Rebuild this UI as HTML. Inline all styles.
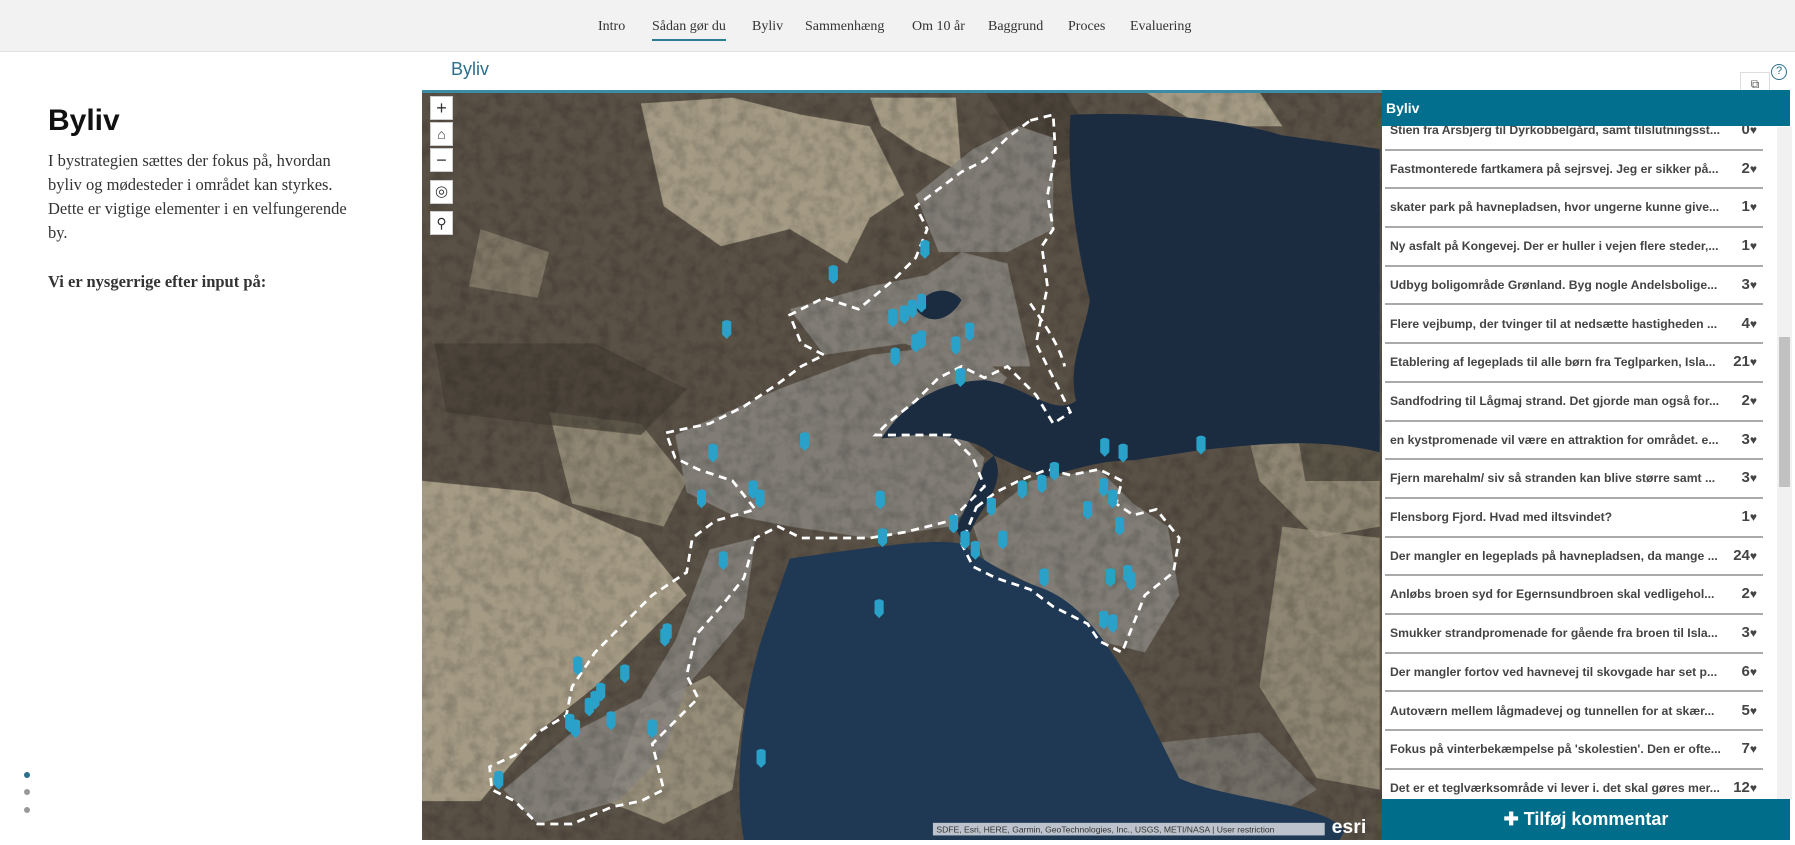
<!DOCTYPE html>
<html><head><meta charset="utf-8">
<style>
*{margin:0;padding:0;box-sizing:border-box}
body{width:1795px;height:840px;overflow:hidden;background:#fff;font-family:"Liberation Sans",sans-serif;position:relative}
.nav{position:absolute;left:0;top:0;width:1795px;height:52px;background:#f2f2f2;border-bottom:1px solid #e2e2e2}
.nav span{position:absolute;top:19px;font-family:"Liberation Serif",serif;font-size:14px;color:#333}
.nav .act{border-bottom:2px solid #2b7d96;padding-bottom:4px}
.left h1{position:absolute;left:48px;top:104px;font-size:30px;font-weight:bold;color:#111}
.left p{position:absolute;left:48px;top:149px;width:305px;font-family:"Liberation Serif",serif;font-size:16.5px;line-height:24px;color:#333}
.left .b{top:270px;font-weight:bold;width:330px}
.dot{position:absolute;left:24px;width:6px;height:6px;border-radius:50%;background:#999}
.title{position:absolute;left:451px;top:59px;font-size:18px;color:#2b6f8a}
.map{position:absolute;left:422px;top:90px;width:960px;height:750px;border-top:3px solid #3c8ca6}
.ctl{position:absolute;left:430px;width:23px;height:24px;background:#fff;border:1px solid #ccc;color:#333;text-align:center;font-size:18px;line-height:22px}
.row{position:absolute;width:378px;height:38.7px;border-bottom:2px solid #aaa;font-size:12.2px;font-weight:bold;color:#444;padding-left:5px;line-height:36px;background:#fff}
.row i{font-style:normal;display:block;width:335px;overflow:hidden;white-space:nowrap}
.row b{position:absolute;right:6px;top:0;font-size:15px;color:#444}
.btn{position:absolute;left:1382px;top:799px;width:408px;height:41px;background:#006d8a;color:#fff;font-weight:bold;font-size:18px;text-align:center;line-height:41px}
.sb{position:absolute;left:1777px;top:127px;width:15px;height:672px;background:#f1f1f1}
</style></head><body>
<div class="nav">
<span style="left:598px">Intro</span>
<span class="act" style="left:652px">Sådan gør du</span>
<span style="left:752px">Byliv</span>
<span style="left:805px">Sammenhæng</span>
<span style="left:912px">Om 10 år</span>
<span style="left:988px">Baggrund</span>
<span style="left:1068px">Proces</span>
<span style="left:1130px">Evaluering</span>
</div>
<div class="left">
<h1>Byliv</h1>
<p>I bystrategien sættes der fokus på, hvordan byliv og mødesteder i området kan styrkes. Dette er vigtige elementer i en velfungerende by.</p>
<p class="b">Vi er nysgerrige efter input på:</p>
</div>
<div class="dot" style="top:772px;background:#2b6f8a"></div>
<div class="dot" style="top:789px"></div>
<div class="dot" style="top:807px"></div>
<div class="title">Byliv</div>
<div style="position:absolute;left:1740px;top:72px;width:30px;height:24px;background:#fff;border:1px solid #ddd;font-size:12px;text-align:center;line-height:22px;color:#555">⧉</div>
<div style="position:absolute;left:1771px;top:64px;width:16px;height:16px;border:1.5px solid #2b6f8a;border-radius:50%;font-size:11px;text-align:center;line-height:13px;color:#2b6f8a">?</div>
<div class="map">
<svg width="960" height="747" viewBox="369 81 838 653" preserveAspectRatio="none">
<defs><filter id="n" x="0" y="0" width="100%" height="100%"><feTurbulence type="fractalNoise" baseFrequency="0.09" numOctaves="3" seed="4"/><feColorMatrix type="matrix" values="0 0 0 0 0  0 0 0 0 0  0 0 0 0 0  0 0 0 1.2 -0.45"/></filter></defs>
<rect x="369" y="79" width="840" height="660" fill="#5a5146"/>
<g fill="#aea48d" opacity=".9">
<path d="M560,90 L640,85 L700,100 L760,110 L790,170 L760,190 L740,230 L690,200 L630,215 L580,180 Z"/>
<path d="M760,85 L835,85 L840,150 L800,130 L770,110Z"/>
<path d="M1070,300 L1205,290 L1205,460 L1150,470 L1100,420 Z" opacity=".7"/>
<path d="M1120,460 L1205,470 L1205,690 L1150,680 L1100,600 Z" opacity=".7"/>
<path d="M369,420 L470,430 L560,470 L600,520 L560,560 L520,600 L470,640 L420,700 L369,700Z"/>
<path d="M480,360 L560,370 L600,420 L580,460 L500,440Z" opacity=".7"/>
<path d="M1000,80 L1100,80 L1120,110 L1050,110Z"/>
<path d="M420,200 L480,220 L470,260 L410,250Z" opacity=".5"/>
<path d="M560,620 L620,590 L650,620 L640,690 L580,720 L530,700Z" opacity=".8"/>
</g>
<g fill="#463e35" opacity=".7">
<path d="M380,300 L520,300 L600,340 L560,380 L470,370 L390,360Z"/>
<path d="M860,80 L930,80 L960,130 L900,150 L880,110Z"/>
<path d="M1130,360 L1205,360 L1205,420 L1140,420Z"/>
</g>
<g fill="#888680" opacity=".85">
<path d="M590,380 L680,340 L760,310 L840,300 L880,330 L840,380 L860,400 L850,440 L830,460 L760,470 L690,460 L640,450 L600,430Z"/>
<path d="M690,270 L760,250 L810,240 L840,220 L880,230 L900,320 L850,320 L790,300 L720,310Z"/>
<path d="M800,170 L850,130 L890,110 L920,120 L920,200 L880,220 L820,220Z"/>
<path d="M850,460 L900,420 L960,410 L990,440 L1020,460 L1030,520 L1000,570 L960,560 L900,510 L860,490Z"/>
<path d="M440,690 L500,640 L560,610 L590,560 L620,480 L660,470 L650,540 L600,600 L580,660 L540,700 L470,720Z"/>
<path d="M1000,650 L1100,640 L1150,690 L1080,734 L1000,734Z" opacity=".7"/>
</g>
<rect x="369" y="79" width="840" height="660" filter="url(#n)" opacity=".3"/>
<g fill="#1c2c40">
<path d="M935,100 C990,98 1060,100 1120,118 L1205,130 L1205,395 C1150,382 1100,388 1050,393 L990,402 C960,402 940,410 915,416 C895,412 880,402 868,398 C858,386 830,380 800,380 L770,383 C792,350 822,333 860,332 C895,336 920,365 940,350 C932,318 948,290 952,262 C938,205 932,150 935,100Z"/>
<path d="M800,270 C810,250 830,250 840,262 C830,280 812,285 800,270Z"/>
<path d="M868,398 C880,420 860,440 850,460 L842,475 L835,462 C845,440 855,420 860,405Z"/>
</g>
<path fill="#1f3854" d="M690,488 C760,478 815,470 840,475 C862,492 880,502 905,512 C945,525 965,560 990,600 L1030,680 C1075,700 1150,700 1175,725 L1170,734 L650,734 C640,680 650,600 670,545 Z"/>
<g fill="none" stroke="#fff" stroke-width="2.4" stroke-dasharray="7 5">
<path d="M900,105 L920,100 L922,135 L915,170 L920,200 L910,215 L915,250 L905,300 L920,330 L935,360 L920,370 L905,345 L880,320 L860,330 L840,320 L820,330 L800,350 L775,370 L765,380 L830,380 L850,400 L860,425 L845,440 L830,455 L790,465 L760,470 L700,470 L680,460 L660,470 L650,505 L630,530 L608,555 L600,590 L610,610 L590,630 L570,650 L580,690 L560,700 L535,705 L500,720 L470,720 L450,700 L430,690 L428,670 L450,660 L470,640 L495,625 L500,600 L520,570 L545,545 L570,520 L600,500 L605,470 L625,455 L660,445 L640,420 L610,410 L590,400 L582,378 L620,370 L650,355 L680,335 L700,320 L720,310 L700,300 L690,275 L720,260 L750,270 L780,245 L800,225 L810,200 L800,180 L820,165 L840,150 L860,140 L880,120 Z"/>
<path d="M853,443 L870,430 L890,420 L915,410 L935,415 L960,410 L980,420 L975,440 L990,450 L1010,445 L1030,470 L1025,500 L1000,520 L990,545 L980,570 L960,560 L950,545 L920,530 L900,515 L870,505 L850,495 L840,475Z"/>
<path d="M900,265 C910,280 925,300 930,320"/>
</g>
<g fill="#2aa1c9" id="pins"></g>
<rect x="815" y="719" width="342" height="11" fill="#fff" opacity=".7"/>
<text x="818" y="727.5" font-family="Liberation Sans" font-size="7.5" fill="#333">SDFE, Esri, HERE, Garmin, GeoTechnologies, Inc., USGS, METI/NASA | User restriction</text>
<text x="1163" y="728" font-family="Liberation Sans" font-size="17" font-weight="bold" fill="#fff">esri</text>
</svg>
</div>
<div class="ctl" style="top:96px">+</div>
<div class="ctl" style="top:122px;font-size:14px">⌂</div>
<div class="ctl" style="top:148px">−</div>
<div class="ctl" style="top:180px;font-size:15px">◎</div>
<div class="ctl" style="top:211px;font-size:14px">⚲</div>
<div style="position:absolute;left:1382px;top:90px;width:408px;height:710px;background:#fff"></div>
<div id="rows"></div>
<div class="sb"><div style="position:absolute;left:2px;top:210px;width:11px;height:150px;background:#c1c1c1"></div></div>
<div class="btn">✚ Tilføj kommentar</div>
<div style="position:absolute;left:1382px;top:90px;width:408px;height:36px;background:#016f8d;color:#fff;font-weight:bold;font-size:14px;padding:10px 4px">Byliv</div>
<script>
var pins=[[728,240],[635,288],[808,218],[780,278],[790,275],[797,270],[805,265],[782,312],[800,300],[805,297],[835,302],[847,290],[839,330],[703,386],[623,396],[613,436],[658,428],[664,436],[769,437],[771,470],[833,458],[843,472],[852,481],[866,443],[876,472],[893,428],[910,423],[921,412],[950,446],[965,391],[981,396],[1049,389],[964,426],[972,436],[978,460],[912,505],[970,505],[985,502],[988,508],[964,542],[972,545],[768,532],[632,490],[583,553],[581,557],[546,589],[505,582],[525,605],[520,612],[515,618],[534,630],[570,637],[498,632],[503,637],[665,663],[436,682]];
var s='';
pins.forEach(function(p){var x=p[0],y=p[1];s+='<path d="M'+(x-4)+','+(y-7)+' Q'+x+','+(y-10)+' '+(x+4)+','+(y-7)+' L'+(x+4)+','+(y+4)+' L'+x+','+(y+8)+' L'+(x-4)+','+(y+4)+'Z"/>';});
document.getElementById('pins').innerHTML=s;
var rows=[["Stien fra Arsbjerg til Dyrkobbelgård, samt tilslutningsst...",0],["Fastmonterede fartkamera på sejrsvej. Jeg er sikker på...",2],["skater park på havnepladsen, hvor ungerne kunne give...",1],["Ny asfalt på Kongevej. Der er huller i vejen flere steder,...",1],["Udbyg boligområde Grønland. Byg nogle Andelsbolige...",3],["Flere vejbump, der tvinger til at nedsætte hastigheden ...",4],["Etablering af legeplads til alle børn fra Teglparken, Isla...",21],["Sandfodring til Lågmaj strand. Det gjorde man også for...",2],["en kystpromenade vil være en attraktion for området. e...",3],["Fjern marehalm/ siv så stranden kan blive større samt ...",3],["Flensborg Fjord. Hvad med iltsvindet?",1],["Der mangler en legeplads på havnepladsen, da mange ...",24],["Anløbs broen syd for Egernsundbroen skal vedligehol...",2],["Smukker strandpromenade for gående fra broen til Isla...",3],["Der mangler fortov ved havnevej til skovgade har set p...",6],["Autoværn mellem lågmadevej og tunnellen for at skær...",5],["Fokus på vinterbekæmpelse på 'skolestien'. Den er ofte...",7],["Det er et teglværksområde vi lever i. det skal gøres mer...",12]];
var h='';rows.forEach(function(r,i){var t=112+i*38.7;h+='<div class="row" style="left:1385px;top:'+t+'px"><i>'+r[0]+'</i><b>'+r[1]+'<span style="font-size:12px">♥</span></b></div>';});
document.getElementById('rows').innerHTML=h;
</script>
</body></html>
